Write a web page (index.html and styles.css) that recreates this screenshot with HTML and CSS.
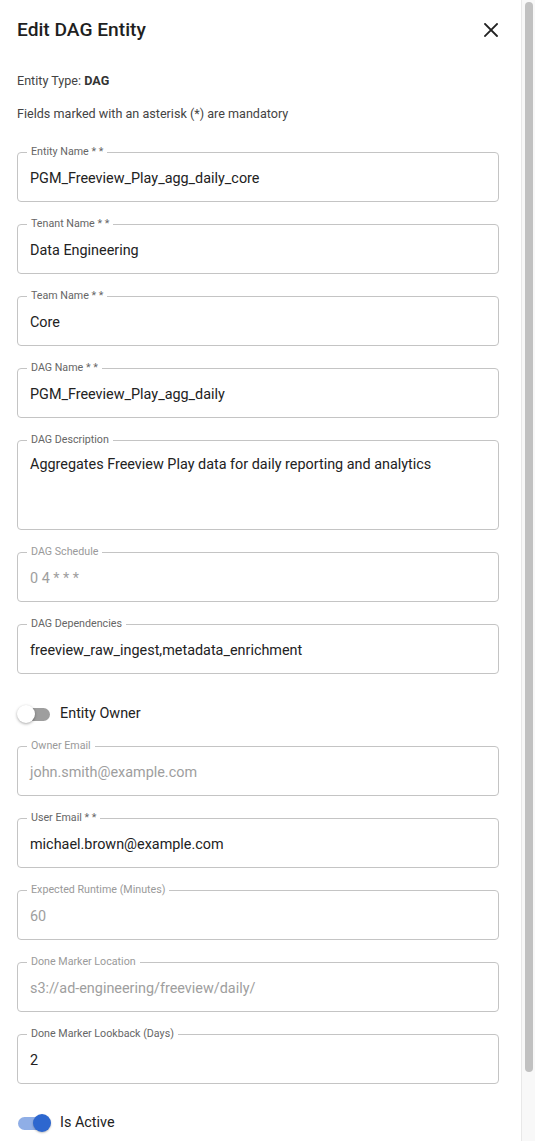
FILE: index.html
```html
<!DOCTYPE html>
<html lang="en">
<head>
<meta charset="utf-8">
<title>Edit DAG Entity</title>
<link rel="stylesheet" href="styles.css">
</head>
<body>
<div class="frame">
  <div class="panel">
    <div class="header">
      <h1 class="title">Edit DAG Entity</h1>
      <button class="close" aria-label="Close">
        <svg width="14" height="14" viewBox="0 0 14 14"><path d="M1 1L13 13M13 1L1 13" stroke="#222" stroke-width="1.8" stroke-linecap="square"/></svg>
      </button>
    </div>
    <p class="meta">Entity Type: <b>DAG</b></p>
    <p class="meta note">Fields marked with an asterisk (*) are mandatory</p>

    <div class="form">
      <div class="field"><span class="label">Entity Name * *</span><div class="value">PGM_Freeview_Play_agg_daily_core</div></div>
      <div class="field"><span class="label">Tenant Name * *</span><div class="value">Data Engineering</div></div>
      <div class="field"><span class="label">Team Name * *</span><div class="value">Core</div></div>
      <div class="field"><span class="label">DAG Name * *</span><div class="value">PGM_Freeview_Play_agg_daily</div></div>
      <div class="field tall"><span class="label">DAG Description</span><div class="value">Aggregates Freeview Play data for daily reporting and analytics</div></div>
      <div class="field disabled"><span class="label">DAG Schedule</span><div class="value">0 4 * * *</div></div>
      <div class="field"><span class="label">DAG Dependencies</span><div class="value">freeview_raw_ingest,metadata_enrichment</div></div>

      <div class="toggle-row first">
        <span class="switch off"><span class="track"></span><span class="thumb"></span></span>
        <span class="toggle-label">Entity Owner</span>
      </div>

      <div class="field disabled"><span class="label">Owner Email</span><div class="value">john.smith@example.com</div></div>
      <div class="field"><span class="label">User Email * *</span><div class="value">michael.brown@example.com</div></div>
      <div class="field disabled"><span class="label">Expected Runtime (Minutes)</span><div class="value">60</div></div>
      <div class="field disabled"><span class="label">Done Marker Location</span><div class="value">s3://ad-engineering/freeview/daily/</div></div>
      <div class="field"><span class="label">Done Marker Lookback (Days)</span><div class="value">2</div></div>

      <div class="toggle-row">
        <span class="switch on"><span class="track"></span><span class="thumb"></span></span>
        <span class="toggle-label">Is Active</span>
      </div>
    </div>
  </div>
  <div class="scrollbar"><div class="scroll-thumb"></div></div>
</div>
</body>
</html>
```

FILE: styles.css
```css
* { box-sizing: border-box; }
html, body { margin: 0; padding: 0; height: 100%; overflow: hidden; }
body {
  font-family: Roboto, "Liberation Sans", Arial, sans-serif;
  color: #222;
  background: #fff;
}
.frame {
  display: flex;
  height: 100vh;
}
.panel {
  flex: 1;
  padding: 18px 22px 0 17px;
  overflow: hidden;
}
.header {
  display: flex;
  align-items: center;
  justify-content: space-between;
  height: 24px;
}
.title {
  margin: 0;
  font-size: 19.2px;
  font-weight: 500;
  line-height: 24px;
  color: #1f1f1f;
}
.close {
  border: 0;
  background: none;
  padding: 0;
  margin-right: 1px;
  width: 14px;
  height: 14px;
  display: flex;
}
.meta {
  margin: 31px 0 0;
  font-size: 12.6px;
  line-height: 16px;
  color: #444;
}
.meta b { font-weight: 700; color: #333; }
.meta.note { margin-top: 17px; }
.form {
  margin-top: 30px;
  display: flex;
  flex-direction: column;
  gap: 22px;
}
.field {
  position: relative;
  border: 1px solid #c4c4c4;
  border-radius: 4px;
  height: 50px;
  padding: 15px 12px 0;
}
.field.tall { height: 90px; padding-top: 13px; }
.label {
  position: absolute;
  top: -8px;
  left: 9px;
  padding: 0 4px;
  background: #fff;
  font-size: 10.7px;
  line-height: 13px;
  color: #666;
}
.value {
  font-size: 14.4px;
  line-height: 21px;
  color: #222;
  white-space: nowrap;
}
.field.disabled .label { color: #9a9a9a; }
.field.disabled .value { color: #9e9e9e; }

.toggle-row {
  display: flex;
  align-items: center;
  gap: 10px;
  height: 30px;
  padding-top: 4px;
}
.toggle-row.first { height: 28px; padding-top: 8px; }
.switch {
  position: relative;
  width: 33px;
  height: 20px;
  display: inline-block;
}
.track {
  position: absolute;
  left: 2px;
  right: 0;
  top: 4px;
  height: 13px;
  border-radius: 7px;
}
.thumb {
  position: absolute;
  top: 1px;
  width: 18px;
  height: 18px;
  border-radius: 50%;
}
.switch.off .track { background: #9e9e9e; left: 6px; }
.switch.off .thumb {
  left: 0;
  background: #fff;
  box-shadow: 0 1px 3px rgba(0,0,0,0.35);
}
.switch.on .track { background: #8faee6; left: 1px; right: 6px; }
.switch.on .thumb {
  left: 16px;
  background: #2d67cf;
  box-shadow: 0 1px 2px rgba(0,0,0,0.25);
}
.toggle-label {
  font-size: 14.4px;
  line-height: 20px;
  color: #222;
}

.scrollbar {
  width: 14px;
  flex: none;
  background: #f8f8f8;
  border-left: 1px solid #e8e8e8;
  padding: 2px 2px 0 3px;
}
.scroll-thumb {
  height: 1070px;
  background: #c1c1c1;
  border-radius: 4px;
}
```
